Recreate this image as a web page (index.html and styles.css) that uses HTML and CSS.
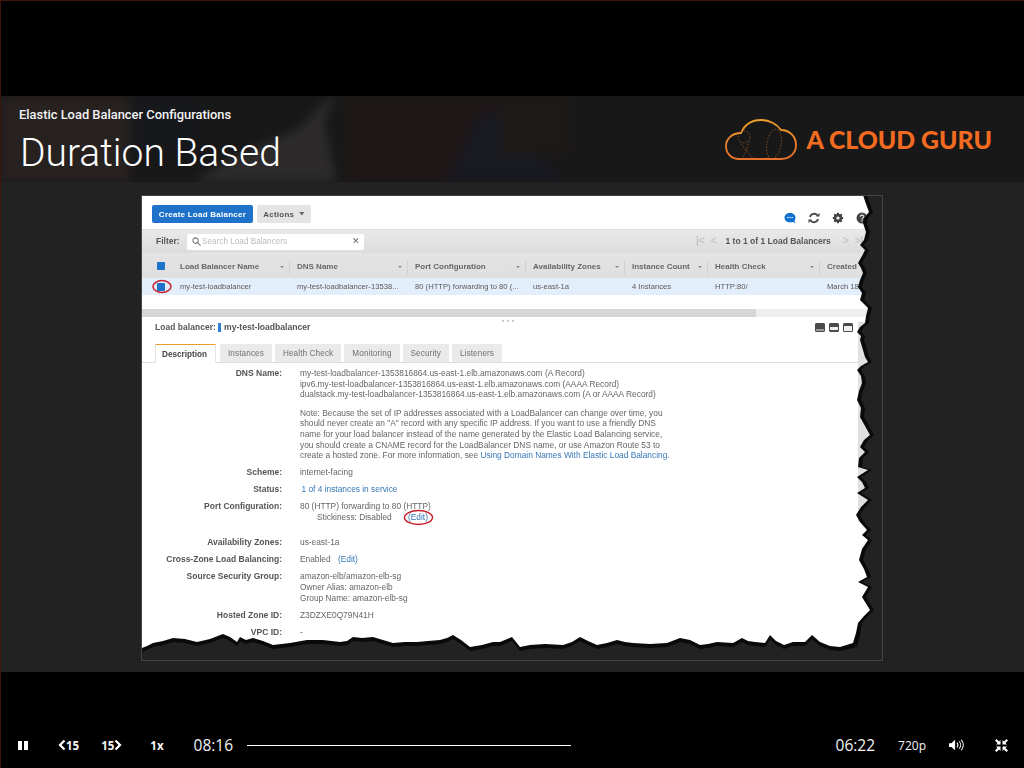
FILE: index.html
```html
<!DOCTYPE html>
<html lang="en">
<head>
    <meta charset="UTF-8">
    <meta name="viewport" content="width=device-width, initial-scale=1.0">
    <title>Duration Based</title>
    <link rel="stylesheet" href="styles.css">
</head>
<body>
<div class="player">
    <div class="letterbox-top"></div>

    <section class="slide">
        <!-- Slide title band, blurred video behind it -->
        <header class="slide-head">
            <svg class="head-video" viewBox="0 0 1024 86" preserveAspectRatio="none" aria-hidden="true">
                <rect class="v-left" x="-10" y="-10" width="140" height="110"/>
                <rect class="v-dark" x="130" y="-10" width="70" height="70"/>
                <polygon class="v-shirt" points="335,-5 325,30 340,100 170,100 235,60 300,32"/>
                <rect class="v-face" x="345" y="-10" width="170" height="110"/>
                <polygon class="v-collar" points="440,100 478,20 500,16 580,100"/>
                <rect class="v-wall" x="500" y="-10" width="70" height="70"/>
            </svg>
            <div class="head-text">
                <div class="course">Elastic Load Balancer Configurations</div>
                <h1 class="lesson">Duration Based</h1>
            </div>
            <div class="logo">
                <svg class="logo-cloud" viewBox="0 0 72 41" aria-hidden="true">
                    <defs>
                        <linearGradient id="cloud-grad" x1="0" y1="0" x2="0" y2="1">
                            <stop offset="0" stop-color="#f0a12a"/>
                            <stop offset="1" stop-color="#e8702a"/>
                        </linearGradient>
                    </defs>
                    <g class="cloud-dots">
                        <circle cx="19" cy="18" r="6"/>
                        <ellipse cx="49" cy="25" rx="7" ry="15" transform="rotate(10 49 25)"/>
                        <path d="M15 22 C19 30 24 36 30 40"/>
                        <path d="M24 22 C22 30 20 35 17 40"/>
                    </g>
                    <path class="cloud-line" stroke="url(#cloud-grad)" d="M14 40 H56 C66 40 71 33 71 26 C71 17 64 11 56 11 C52 5 44 1 36 1 C28 1 20 5 16 14 C7 14 1 20 1 27 C1 35 7 40 14 40 Z"/>
                </svg>
                <span class="logo-name">A CLOUD GURU</span>
            </div>
        </header>

        <div class="slide-body">
            <div class="shot">
                <div class="console">
                    <div class="toolbar">
                        <button class="btn-primary">Create Load Balancer</button>
                        <button class="btn-actions">Actions <span class="caret"></span></button>
                        <div class="tool-icons">
                            <svg viewBox="0 0 12 12" aria-hidden="true"><path class="ic-blue" d="M6 1 C9 1 11.500 2.800 11.500 5.500 C11.500 7 11 8.200 10.500 9 L11.500 11 L8.500 10 C3.500 11 .5 8.800 .5 5.500 C.5 2.800 3 1 6 1 Z"/><circle class="ic-hole" cx="3.800" cy="5.500" r=".7"/><circle class="ic-hole" cx="6" cy="5.500" r=".7"/><circle class="ic-hole" cx="8.200" cy="5.500" r=".7"/></svg>
                            <svg viewBox="0 0 12 12" aria-hidden="true"><path class="ic-stroke" d="M2 5 A4.200 4.200 0 0 1 9.500 3.500 M10 7 A4.200 4.200 0 0 1 2.500 8.500"/><path class="ic-fill" d="M8 4.500 H11.500 V1 Z M4 7.500 H.5 V11 Z"/></svg>
                            <svg viewBox="0 0 12 12" aria-hidden="true"><circle class="ic-fill" cx="6" cy="6" r="4.300"/><path class="ic-tooth" d="M6 .8 V11.200 M.8 6 H11.200 M2.300 2.300 L9.700 9.700 M9.700 2.300 L2.300 9.700"/><circle class="ic-hole" cx="6" cy="6" r="1.600"/></svg>
                            <svg viewBox="0 0 12 12" aria-hidden="true"><circle class="ic-fill" cx="6" cy="6" r="5.500"/><path class="ic-help" d="M4.300 4.700 C4.300 2.600 7.800 2.600 7.800 4.600 C7.800 5.900 6 5.900 6 7.400 M6 8.300 V9.600"/></svg>
                        </div>
                    </div>

                    <div class="filter-bar">
                        <span class="filter-label">Filter:</span>
                        <div class="filter-input">
                            <svg viewBox="0 0 10 10" aria-hidden="true"><circle class="ic-search" cx="4" cy="4" r="3"/><path class="ic-search" d="M6.200 6.200 L9.500 9.500"/></svg>
                            <span class="filter-hint">Search Load Balancers</span>
                            <span class="filter-clear">&#10005;</span>
                        </div>
                        <div class="pager">
                            <span class="pager-arrow">|&lt;</span>
                            <span class="pager-arrow">&lt;</span>
                            <span class="pager-text">1 to 1 of 1 Load Balancers</span>
                            <span class="pager-arrow">&gt;</span>
                            <span class="pager-arrow">&gt;|</span>
                        </div>
                    </div>

                    <div class="grid-row grid-head">
                        <div class="check-cell"><span class="check"></span></div>
                        <div class="th">Load Balancer Name<span class="sort"></span></div>
                        <div class="th">DNS Name<span class="sort"></span></div>
                        <div class="th">Port Configuration<span class="sort"></span></div>
                        <div class="th">Availability Zones<span class="sort"></span></div>
                        <div class="th">Instance Count<span class="sort"></span></div>
                        <div class="th">Health Check<span class="sort"></span></div>
                        <div class="th">Created</div>
                    </div>
                    <div class="grid-row grid-selected">
                        <div class="check-cell"><span class="check"></span></div>
                        <div class="td">my-test-loadbalancer</div>
                        <div class="td">my-test-loadbalancer-13538...</div>
                        <div class="td">80 (HTTP) forwarding to 80 (...</div>
                        <div class="td">us-east-1a</div>
                        <div class="td">4 Instances</div>
                        <div class="td">HTTP:80/</div>
                        <div class="td">March 18</div>
                    </div>

                    <div class="h-scroll"><div class="h-thumb"></div></div>
                    <div class="grip"><i></i><i></i><i></i></div>

                    <div class="pane-title">
                        <span class="pane-key">Load balancer:</span>
                        <span class="pane-mark"></span>
                        <span class="pane-name">my-test-loadbalancer</span>
                        <div class="pane-icons">
                            <span class="pane-ic ic-low"></span>
                            <span class="pane-ic ic-mid"></span>
                            <span class="pane-ic ic-high"></span>
                        </div>
                    </div>

                    <div class="tabs">
                        <span class="tab tab-active">Description</span>
                        <span class="tab">Instances</span>
                        <span class="tab">Health Check</span>
                        <span class="tab">Monitoring</span>
                        <span class="tab">Security</span>
                        <span class="tab">Listeners</span>
                    </div>

                    <div class="details">
                        <div class="dt">DNS Name:</div>
                        <div class="dd">
                            my-test-loadbalancer-1353816864.us-east-1.elb.amazonaws.com (A Record)<br>
                            ipv6.my-test-loadbalancer-1353816864.us-east-1.elb.amazonaws.com (AAAA Record)<br>
                            dualstack.my-test-loadbalancer-1353816864.us-east-1.elb.amazonaws.com (A or AAAA Record)
                            <p class="note">Note: Because the set of IP addresses associated with a LoadBalancer can change over time, you<br>
                            should never create an "A" record with any specific IP address. If you want to use a friendly DNS<br>
                            name for your load balancer instead of the name generated by the Elastic Load Balancing service,<br>
                            you should create a CNAME record for the LoadBalancer DNS name, or use Amazon Route 53 to<br>
                            create a hosted zone. For more information, see <a class="link">Using Domain Names With Elastic Load Balancing</a>.</p>
                        </div>
                        <div class="dt">Scheme:</div>
                        <div class="dd">internet-facing</div>
                        <div class="dt">Status:</div>
                        <div class="dd"><a class="link status-link">1 of 4 instances in service</a></div>
                        <div class="dt">Port Configuration:</div>
                        <div class="dd">
                            80 (HTTP) forwarding to 80 (HTTP)<br>
                            <span class="sticky">Stickiness: Disabled <a class="link sticky-edit">(Edit)</a></span>
                        </div>
                        <div class="dt after-port">Availability Zones:</div>
                        <div class="dd after-port">us-east-1a</div>
                        <div class="dt">Cross-Zone Load Balancing:</div>
                        <div class="dd">Enabled <a class="link cross-edit">(Edit)</a></div>
                        <div class="dt">Source Security Group:</div>
                        <div class="dd">amazon-elb/amazon-elb-sg<br>Owner Alias: amazon-elb<br>Group Name: amazon-elb-sg</div>
                        <div class="dt">Hosted Zone ID:</div>
                        <div class="dd">Z3DZXE0Q79N41H</div>
                        <div class="dt">VPC ID:</div>
                        <div class="dd">-</div>
                    </div>
                </div>

                <!-- Red marks and torn paper edge drawn over the screenshot -->
                <svg class="shot-over" viewBox="141 195 742 466" aria-hidden="true">
                    <rect class="pane-strip" x="858" y="322" width="16" height="200"/>
                    <ellipse class="mark" cx="162" cy="286.500" rx="9" ry="6"/>
                    <ellipse class="mark" cx="418.500" cy="517.500" rx="14" ry="7"/>
                    <path class="torn-shadow" d="M863 195 L866 204 L869 212 L864 218 L863 223 L866 232 L864 240 L860 245 L865 250 L862 256 L858 263 L861 268 L863 273 L860 280 L858 287 L862 293 L860 300 L864 304 L868 308 L866 316 L865 323 L860 327 L857 332 L861 336 L860 340 L863 350 L865 357 L868 362 L861 366 L857 370 L861 376 L862 383 L859 391 L857 400 L861 408 L860 417 L865 426 L870 435 L864 440 L860 447 L865 452 L859 458 L858 467 L868 470 L857 477 L862 482 L865 488 L857 493 L868 500 L861 507 L856 515 L860 522 L867 530 L862 535 L868 540 L862 549 L859 560 L864 569 L867 577 L858 582 L868 587 L862 597 L870 610 L864 616 L858 623 L856 633 L853 643 L840 647 L830 646 L820 642 L812 635 L805 642 L793 642 L784 645 L776 641 L770 635 L765 643 L755 642 L748 641 L742 638 L733 643 L717 642 L708 644 L700 645 L690 640 L680 638 L667 643 L650 644 L633 643 L625 642 L617 640 L607 643 L597 645 L588 641 L580 637 L572 642 L563 645 L545 644 L530 645 L520 647 L512 637 L500 642 L493 642 L482 645 L470 647 L461 640 L453 635 L447 638 L440 640 L428 641 L417 642 L405 642 L393 643 L383 640 L373 637 L362 638 L353 637 L347 641 L340 642 L323 640 L307 640 L290 643 L273 645 L263 641 L253 638 L246 640 L240 637 L237 642 L230 637 L223 634 L210 639 L197 642 L185 639 L173 638 L163 641 L153 643 L147 646 L142 648 L142 661 L883 661 L883 195 Z"/>
                    <path class="torn-fill" d="M867 195 L870 204 L873 212 L868 218 L867 223 L870 232 L868 240 L864 245 L869 250 L866 256 L862 263 L865 268 L867 273 L864 280 L862 287 L866 293 L864 300 L868 304 L872 308 L870 316 L869 323 L864 327 L861 332 L865 336 L864 340 L867 350 L869 357 L872 362 L865 366 L861 370 L865 376 L866 383 L863 391 L861 400 L865 408 L864 417 L869 426 L874 435 L868 440 L864 447 L869 452 L863 458 L862 467 L872 470 L861 477 L866 482 L869 488 L861 493 L872 500 L865 507 L860 515 L864 522 L871 530 L866 535 L872 540 L866 549 L863 560 L868 569 L871 577 L862 582 L872 587 L866 597 L874 610 L868 616 L862 623 L860 635 L857 647 L840 651 L830 650 L820 646 L812 639 L805 646 L793 646 L784 649 L776 645 L770 639 L765 647 L755 646 L748 645 L742 642 L733 647 L717 646 L708 648 L700 649 L690 644 L680 642 L667 647 L650 648 L633 647 L625 646 L617 644 L607 647 L597 649 L588 645 L580 641 L572 646 L563 649 L545 648 L530 649 L520 651 L512 641 L500 646 L493 646 L482 649 L470 651 L461 644 L453 639 L447 642 L440 644 L428 645 L417 646 L405 646 L393 647 L383 644 L373 641 L362 642 L353 641 L347 645 L340 646 L323 644 L307 644 L290 647 L273 649 L263 645 L253 642 L246 644 L240 641 L237 646 L230 641 L223 638 L210 643 L197 646 L185 643 L173 642 L163 645 L153 647 L147 650 L142 652 L142 661 L883 661 L883 195 Z"/>
                </svg>
            </div>
        </div>
    </section>

    <!-- Player controls -->
    <div class="letterbox-bottom">
        <div class="controls">
            <div class="pause"><i></i><i></i></div>
            <div class="skip skip-back">
                <svg viewBox="0 0 8 12" aria-hidden="true"><path class="chevron" d="M6.500 1.500 L2 6 L6.500 10.500"/></svg>
                <span>15</span>
            </div>
            <div class="skip skip-fwd">
                <span>15</span>
                <svg viewBox="0 0 8 12" aria-hidden="true"><path class="chevron" d="M1.500 1.500 L6 6 L1.500 10.500"/></svg>
            </div>
            <div class="speed">1x</div>
            <div class="time time-now">08:16</div>
            <div class="track"><div class="track-fill" style="width: 56.5%"></div></div>
            <div class="time time-left">06:22</div>
            <div class="quality">720p</div>
            <svg class="volume" viewBox="0 0 16 12" aria-hidden="true">
                <path class="vol-fill" d="M0 4 H2.500 L6.500 .5 V11.500 L2.500 8 H0 Z"/>
                <path class="vol-wave" d="M8.500 3.500 C9.800 5 9.800 7 8.500 8.500 M10.800 2 C13 4.300 13 7.700 10.800 10 M13 .5 C16 3.700 16 8.300 13 11.500"/>
            </svg>
            <svg class="shrink" viewBox="0 0 13 13" aria-hidden="true">
                <path class="vol-fill" d="M0 1.500 L1.500 0 L4 2.500 L5.500 1 V5.500 H1 L2.500 4 Z M13 1.500 L11.500 0 L9 2.500 L7.500 1 V5.500 H12 L10.500 4 Z M0 11.500 L1.500 13 L4 10.500 L5.500 12 V7.500 H1 L2.500 9 Z M13 11.500 L11.500 13 L9 10.500 L7.500 12 V7.500 H12 L10.500 9 Z"/>
            </svg>
        </div>
    </div>
</div>
</body>
</html>
```

FILE: styles.css
```css
* {
    box-sizing: border-box;
}
body {
    margin: 0;
    background: #000;
    font-family: "Liberation Sans", Arial, sans-serif;
    overflow: hidden;
}
.player {
    position: relative;
    width: 1024px;
    height: 768px;
    display: flex;
    flex-direction: column;
    background: #000;
}
/* thin reddish line round the video */
.player::after {
    content: "";
    position: absolute;
    inset: 0;
    border-top: 1px solid #3c160c;
    border-left: 1px solid #3c160c;
}
.letterbox-top {
    height: 96px;
}
.slide {
    height: 576px;
    display: flex;
    flex-direction: column;
    background: #232223;
}

/* title band */
.slide-head {
    position: relative;
    height: 86px;
    flex: none;
    display: flex;
    justify-content: space-between;
    overflow: hidden;
    background: #191818;
}
.head-video {
    position: absolute;
    inset: 0;
    width: 100%;
    height: 100%;
    filter: blur(4px);
}
.v-left { fill: #272120; }
.v-dark { fill: #17181b; }
.v-shirt { fill: #2c2a2a; }
.v-face { fill: #1e1717; }
.v-collar { fill: #191921; }
.v-wall { fill: #1c1917; }
.head-text {
    position: relative;
    padding: 11px 0 0 19px;
    color: #f2f2f2;
}
.course {
    font-family: Roboto, sans-serif;
    font-weight: 500;
    font-size: 12.9px;
    line-height: 16px;
}
.lesson {
    margin: 8px 0 0 1px;
    font-family: Roboto, sans-serif;
    font-weight: 300;
    font-size: 39px;
    line-height: 44px;
    color: #fff;
}
.logo {
    position: relative;
    display: flex;
    align-items: flex-start;
    gap: 10px;
    padding: 23px 32px 0 0;
}
.logo-cloud {
    width: 72px;
    height: 41px;
    fill: none;
}
.cloud-line {
    fill: none;
    stroke-width: 1.8;
}
.cloud-dots {
    fill: none;
    stroke: #7d4a22;
    stroke-width: 1;
    stroke-dasharray: 1.5 1.5;
}
.logo-name {
    margin-top: 5px;
    font-family: Lato, sans-serif;
    font-weight: 900;
    font-size: 24.8px;
    line-height: 32px;
    color: #f26b21;
}

/* screenshot on the slide */
.slide-body {
    flex: 1;
    padding-top: 13px;
}
.shot {
    position: relative;
    width: 742px;
    height: 466px;
    margin: 0 auto;
    overflow: hidden;
    background: #fff;
    border: 1px solid #444;
}
.console {
    height: 100%;
    overflow: hidden;
    color: #5a5a5a;
    font-size: 8.5px;
    line-height: 10.6px;
    filter: blur(0.4px);
}
.shot-over {
    position: absolute;
    top: -1px;
    left: -1px;
    width: 742px;
    height: 466px;
}
.pane-strip {
    fill: #e0e0e0;
}
.mark {
    fill: none;
    stroke: #c8202c;
    stroke-width: 1.5;
}
.torn-shadow {
    fill: #0a0a0a;
    filter: blur(0.7px);
}
.torn-fill {
    fill: #232223;
    filter: blur(0.7px);
}

.toolbar {
    height: 33px;
    display: flex;
    align-items: flex-start;
    padding: 9px 0 0 10px;
    gap: 4px;
}
.btn-primary {
    width: 101px;
    height: 18px;
    padding: 0;
    border: 0;
    border-radius: 2px;
    background: #1f72c9;
    color: #fff;
    font: bold 8px "Liberation Sans", sans-serif;
    letter-spacing: 0.25px;
}
.btn-actions {
    width: 54px;
    height: 18px;
    padding: 0;
    border: 0;
    border-radius: 2px;
    background: #e4e4e4;
    color: #555;
    font: bold 8px "Liberation Sans", sans-serif;
    letter-spacing: 0.25px;
}
.caret {
    display: inline-block;
    width: 6px;
    height: 4px;
    margin-left: 2px;
    vertical-align: 1px;
    background: #666;
    clip-path: polygon(0 0, 100% 0, 50% 100%);
}
.tool-icons {
    display: flex;
    gap: 12px;
    margin-left: auto;
    padding: 7px 14px 0 0;
}
.tool-icons svg {
    width: 12px;
    height: 12px;
}
.ic-blue { fill: #0f6fd0; }
.ic-fill { fill: #444; }
.ic-hole { fill: #fff; }
.ic-tooth {
    fill: none;
    stroke: #444;
    stroke-width: 2;
}
.ic-help {
    fill: none;
    stroke: #ddd;
    stroke-width: 1.2;
}
.ic-stroke {
    fill: none;
    stroke: #444;
    stroke-width: 1.8;
}

.filter-bar {
    height: 24px;
    display: flex;
    align-items: center;
    padding-left: 14px;
    background: linear-gradient(#e9e9e9, #dcdcdc);
    border-top: 1px solid #dedede;
}
.filter-label {
    width: 31px;
    font-weight: bold;
    font-size: 8.5px;
    color: #555;
}
.filter-input {
    width: 177px;
    height: 16px;
    display: flex;
    align-items: center;
    gap: 1px;
    padding: 0 4px 0 5px;
    background: #fff;
    border-radius: 2px;
    color: #bbb;
    font-size: 8.2px;
}
.filter-input svg {
    width: 9px;
    height: 9px;
}
.ic-search {
    fill: none;
    stroke: #777;
    stroke-width: 1.2;
}
.filter-hint {
    flex: 1;
    padding-top: 1px;
}
.filter-clear {
    color: #666;
    font-size: 9px;
}
.pager {
    display: flex;
    align-items: center;
    margin-left: 332px;
    white-space: nowrap;
}
.pager-arrow {
    color: #c4c4c4;
    font-weight: bold;
    font-size: 10px;
    margin-right: 6px;
}
.pager-text {
    margin: 0 12px 0 3px;
    font-weight: bold;
    color: #555;
}

.grid-row {
    display: grid;
    grid-template-columns: 38px 117px 118px 118px 99px 83px 112px 60px;
    align-items: center;
    white-space: nowrap;
}
.grid-head {
    height: 25px;
    background: linear-gradient(#e4e4e4, #e0dfdf);
}
.grid-selected {
    height: 17px;
    background: #e3eefb;
}
.check-cell {
    padding-left: 15px;
}
.check {
    display: block;
    width: 8px;
    height: 8px;
    border-radius: 1px;
    background: #1f72c9;
}
.th {
    display: flex;
    align-items: center;
    justify-content: space-between;
    height: 13px;
    margin: 3px 7px 0 0;
    padding-right: 5px;
    border-right: 1px solid #d0d0d0;
    font-weight: bold;
    font-size: 8px;
    color: #666;
}
.td {
    padding-top: 1px;
    font-size: 7.65px;
}
.sort {
    width: 4px;
    height: 2px;
    background: #888;
    clip-path: polygon(0 0, 100% 0, 50% 100%);
}

.h-scroll {
    height: 8px;
    margin-top: 14px;
    background: #efefef;
}
.h-thumb {
    width: 614px;
    height: 100%;
    background: #d6d6d6;
}
.grip {
    display: flex;
    gap: 3px;
    height: 3px;
    padding: 3px 0 0 360px;
}
.grip i {
    width: 2px;
    height: 2px;
    flex: none;
    background: #ccc;
}

.pane-title {
    display: flex;
    align-items: center;
    height: 14px;
    padding-left: 13px;
    font-size: 8.6px;
}
.pane-key {
    color: #555;
    font-weight: bold;
    font-size: 8.4px;
    letter-spacing: 0.1px;
}
.pane-mark {
    width: 3px;
    height: 9px;
    margin: 0 3px 0 2px;
    background: #2f7fd6;
}
.pane-name {
    font-weight: bold;
    color: #555;
}
.pane-icons {
    display: flex;
    gap: 4px;
    margin-left: auto;
    padding-right: 29px;
}
.pane-ic {
    width: 10px;
    height: 9px;
    border: 1px solid #4a4a4a;
    border-radius: 1px;
}
.ic-low {
    background: linear-gradient(#4a4a4a 75%, #9a9a9a 75%);
}
.ic-mid {
    background: linear-gradient(#4a4a4a 50%, #eee 50%, #eee 80%, #4a4a4a 80%);
}
.ic-high {
    background: linear-gradient(#4a4a4a 25%, #eee 25%);
}

.tabs {
    display: flex;
    gap: 3px;
    height: 19px;
    margin-top: 10px;
    padding-left: 13px;
    border-bottom: 1px solid #ddd;
}
.tab {
    height: 18px;
    padding: 0 8px;
    background: #eaeaea;
    color: #707070;
    font-size: 8.2px;
    line-height: 19px;
    letter-spacing: 0.1px;
}
.tab-active {
    height: 19px;
    width: 61px;
    margin-right: 1px;
    padding: 0 6px;
    background: #fff;
    border-top: 1px solid #eb9b2c;
    border-left: 1px solid #e4e4e4;
    border-right: 1px solid #e4e4e4;
    color: #444;
    font-weight: bold;
    font-size: 8.2px;
    letter-spacing: 0;
}

.details {
    display: grid;
    grid-template-columns: 140px 1fr;
    column-gap: 18px;
    row-gap: 6.5px;
    padding-top: 5px;
}
.dt {
    font-weight: bold;
    text-align: right;
    color: #555;
    white-space: nowrap;
}
.dd {
    color: #666;
    font-size: 8.35px;
    white-space: nowrap;
}
.note {
    margin: 8px 0 0;
}
.link {
    color: #3678b8;
}
.status-link {
    margin-left: 1.5px;
}
.sticky {
    margin-left: 17px;
}
.sticky-edit {
    margin-left: 14px;
}
.cross-edit {
    margin-left: 5px;
}
.after-port {
    margin-top: 8px;
}

/* bottom bar */
.letterbox-bottom {
    flex: 1;
    display: flex;
    align-items: flex-end;
}
.controls {
    width: 100%;
    height: 46px;
    display: flex;
    align-items: center;
    color: #f4f4f4;
    font-family: "Open Sans", sans-serif;
}
.pause {
    display: flex;
    gap: 2px;
    margin-left: 18px;
}
.pause i {
    width: 4px;
    height: 9px;
    background: #fff;
}
.skip {
    display: flex;
    align-items: center;
    font-weight: 700;
    font-size: 11.5px;
}
.skip svg {
    width: 8px;
    height: 12px;
}
.chevron {
    fill: none;
    stroke: #fff;
    stroke-width: 2.200;
}
.skip-back {
    margin-left: 30px;
}
.skip-fwd {
    margin-left: 22px;
}
.speed {
    margin-left: 28px;
    font-weight: 700;
    font-size: 11.5px;
}
.time {
    font-size: 15.5px;
}
.time-now {
    margin-left: 30px;
    width: 53px;
}
.track {
    width: 575px;
    height: 1px;
}
.track-fill {
    height: 1px;
    background: #fff;
}
.time-left {
    margin-left: 14px;
}
.quality {
    margin-left: 23px;
    font-size: 12px;
}
.volume {
    width: 15px;
    height: 12px;
    margin-left: 23px;
}
.vol-fill {
    fill: #fff;
}
.vol-wave {
    fill: none;
    stroke: #fff;
    stroke-width: 1.1;
}
.shrink {
    width: 13px;
    height: 13px;
    margin-left: 31px;
}
```
